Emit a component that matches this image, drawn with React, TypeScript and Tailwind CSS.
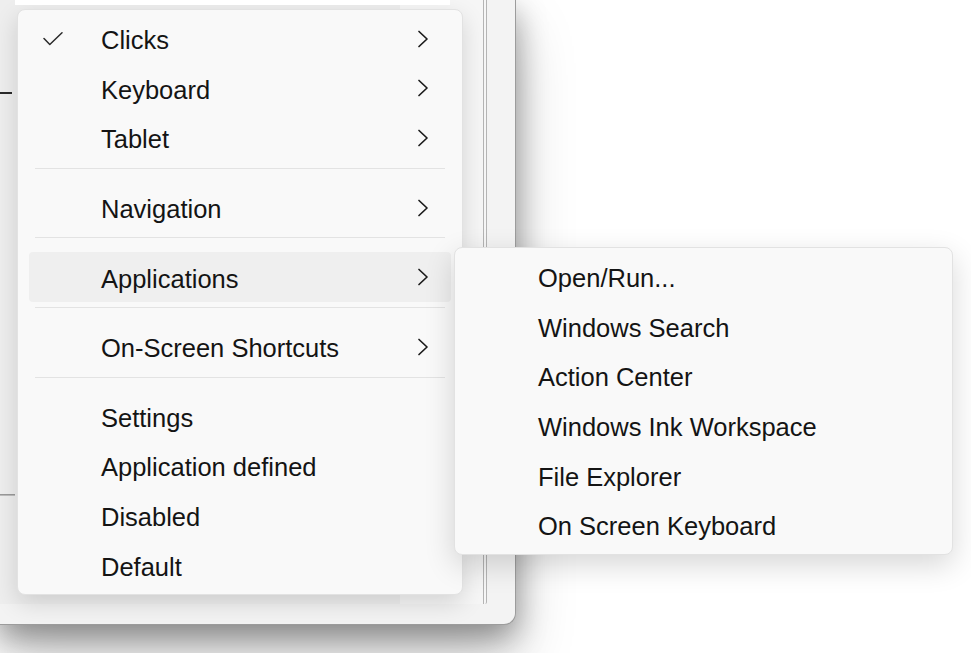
import React from 'react';

type Entry =
  | { kind: 'item'; label: string; checked?: boolean; sub?: boolean; hot?: boolean }
  | { kind: 'sep' };

const mainMenu: Entry[] = [
  { kind: 'item', label: 'Clicks', checked: true, sub: true },
  { kind: 'item', label: 'Keyboard', sub: true },
  { kind: 'item', label: 'Tablet', sub: true },
  { kind: 'sep' },
  { kind: 'item', label: 'Navigation', sub: true },
  { kind: 'sep' },
  { kind: 'item', label: 'Applications', sub: true, hot: true },
  { kind: 'sep' },
  { kind: 'item', label: 'On-Screen Shortcuts', sub: true },
  { kind: 'sep' },
  { kind: 'item', label: 'Settings' },
  { kind: 'item', label: 'Application defined' },
  { kind: 'item', label: 'Disabled' },
  { kind: 'item', label: 'Default' },
];

const appsMenu: Entry[] = [
  { kind: 'item', label: 'Open/Run...' },
  { kind: 'item', label: 'Windows Search' },
  { kind: 'item', label: 'Action Center' },
  { kind: 'item', label: 'Windows Ink Workspace' },
  { kind: 'item', label: 'File Explorer' },
  { kind: 'item', label: 'On Screen Keyboard' },
];

const CheckMark = () => (
  <svg width="20" height="14" viewBox="0 0 20 14" fill="none" stroke="#2b2b2b" strokeWidth="1.5" strokeLinecap="round" strokeLinejoin="round">
    <path d="M1 6.5 L6.8 12.5 L19 0.8" />
  </svg>
);

const Chevron = () => (
  <svg width="12" height="18" viewBox="0 0 12 18" fill="none" stroke="#1b1b1b" strokeWidth="1.7" strokeLinecap="round" strokeLinejoin="round">
    <path d="M2 1.5 L10 9 L2 16.5" />
  </svg>
);

const MenuList: React.FC<{ entries: Entry[] }> = ({ entries }) => (
  <div className="flex flex-col px-[11px] pt-[4px] pb-[4px]">
    {entries.map((e, i) =>
      e.kind === 'sep' ? (
        <div key={i} className="h-[20px] pt-[5px] px-[6px]">
          <div className="h-px bg-[#e3e3e3]" />
        </div>
      ) : (
        <div
          key={i}
          className={`flex items-center h-[49.6px] rounded-[4px] pl-[14px] pr-[22px] ${e.hot ? 'bg-[#efefef]' : ''}`}
        >
          <div className="w-[58px] flex items-center">{e.checked && <CheckMark />}</div>
          <span className="flex-1 mt-[3px] text-[25.5px] text-[#141414] whitespace-nowrap">{e.label}</span>
          {e.sub && <Chevron />}
        </div>
      )
    )}
  </div>
);

export default function App() {
  return (
    <div className="relative w-[971px] h-[653px] overflow-hidden bg-white font-['Liberation_Sans',Arial,sans-serif]">
      {/* window behind the menu */}
      <div className="flex w-[516px] h-[625px] bg-[#f3f3f3] border-r border-b border-[#9c9c9c] rounded-br-[12px] shadow-[0_12px_30px_rgba(0,0,0,0.35),0_30px_60px_rgba(0,0,0,0.22)]">
        <div className="flex flex-col w-[400px] h-[604px] bg-[#eeeeee]">
          <div className="relative z-10 ml-[15px] w-[435px] h-[5px] shrink-0 bg-white" />
          <div className="mt-[87px] w-[12px] h-[2px] bg-[#2a2a2a]" />
          <div className="mt-[400px] w-[15px] h-[1px] bg-[#9a9a9a]" />
          <div className="w-[15px] h-[1px] bg-[#bdbdbd]" />
        </div>
        <div className="w-[87px] h-[604px] bg-[#f6f6f6] border-r-[4px] border-double border-[#b4b4b4] rounded-br-[2px]" />
      </div>

      {/* main context menu */}
      <div className="absolute left-[17px] top-[9px] w-[446px] bg-[#f9f9f9] border border-[#e2e2e2] rounded-[8px] shadow-[0_8px_24px_rgba(0,0,0,0.14)]">
        <MenuList entries={mainMenu} />
      </div>

      {/* Applications submenu */}
      <div className="absolute left-[454px] top-[247px] w-[499px] bg-[#f9f9f9] border border-[#e2e2e2] rounded-[8px] shadow-[0_10px_30px_rgba(0,0,0,0.16)]">
        <MenuList entries={appsMenu} />
      </div>
    </div>
  );
}
